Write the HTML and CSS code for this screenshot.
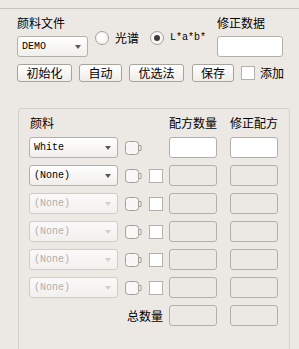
FILE: index.html
```html
<!DOCTYPE html>
<html lang="zh">
<head>
<meta charset="utf-8">
<link rel="stylesheet" href="styles.css">
</head>
<body>
<div class="topline"></div>
<div class="top">
  <div class="field file">
    <div class="label">颜料文件</div>
    <div class="select"><span>DEMO</span><i class="arrow"></i></div>
  </div>
  <div class="radios">
    <div class="radio"><span class="circle"></span><span>光谱</span></div>
    <div class="radio"><span class="circle checked"></span><span class="mono">L*a*b*</span></div>
  </div>
  <div class="field fix">
    <div class="label">修正数据</div>
    <div class="input"></div>
  </div>
</div>
<div class="buttons">
  <div class="btn w55">初始化</div>
  <div class="btn w43">自动</div>
  <div class="btn w55">优选法</div>
  <div class="btn w42 shift">保存</div>
  <div class="check"><span class="box"></span><span>添加</span></div>
</div>
<div class="group">
  <div class="grid">
    <div class="label c1">颜料</div>
    <div class="label c4">配方数量</div>
    <div class="label c5">修正配方</div>

    <div class="select c1"><span>White</span><i class="arrow"></i></div>
    <svg class="swatch c2" width="17" height="14" viewBox="0 0 17 14"><path d="M13.5 4.5h2.5v5h-2.5" fill="#efede9" stroke="#a19d97"/><rect x="0.5" y="0.5" width="13" height="13" rx="3" fill="#f8f7f5" stroke="#a19d97"/></svg>
    <div class="input c4"></div>
    <div class="input c5"></div>

    <div class="select c1"><span>(None)</span><i class="arrow"></i></div>
    <svg class="swatch c2" width="17" height="14" viewBox="0 0 17 14"><path d="M13.5 4.5h2.5v5h-2.5" fill="#efede9" stroke="#a19d97"/><rect x="0.5" y="0.5" width="13" height="13" rx="3" fill="#f8f7f5" stroke="#a19d97"/></svg>
    <span class="box c3"></span>
    <div class="input off c4"></div>
    <div class="input off c5"></div>

    <div class="select dis c1"><span>(None)</span><i class="arrow"></i></div>
    <svg class="swatch c2" width="17" height="14" viewBox="0 0 17 14"><path d="M13.5 4.5h2.5v5h-2.5" fill="#efede9" stroke="#a19d97"/><rect x="0.5" y="0.5" width="13" height="13" rx="3" fill="#f8f7f5" stroke="#a19d97"/></svg>
    <span class="box c3"></span>
    <div class="input off c4"></div>
    <div class="input off c5"></div>

    <div class="select dis c1"><span>(None)</span><i class="arrow"></i></div>
    <svg class="swatch c2" width="17" height="14" viewBox="0 0 17 14"><path d="M13.5 4.5h2.5v5h-2.5" fill="#efede9" stroke="#a19d97"/><rect x="0.5" y="0.5" width="13" height="13" rx="3" fill="#f8f7f5" stroke="#a19d97"/></svg>
    <span class="box c3"></span>
    <div class="input off c4"></div>
    <div class="input off c5"></div>

    <div class="select dis c1"><span>(None)</span><i class="arrow"></i></div>
    <svg class="swatch c2" width="17" height="14" viewBox="0 0 17 14"><path d="M13.5 4.5h2.5v5h-2.5" fill="#efede9" stroke="#a19d97"/><rect x="0.5" y="0.5" width="13" height="13" rx="3" fill="#f8f7f5" stroke="#a19d97"/></svg>
    <span class="box c3"></span>
    <div class="input off c4"></div>
    <div class="input off c5"></div>

    <div class="select dis c1"><span>(None)</span><i class="arrow"></i></div>
    <svg class="swatch c2" width="17" height="14" viewBox="0 0 17 14"><path d="M13.5 4.5h2.5v5h-2.5" fill="#efede9" stroke="#a19d97"/><rect x="0.5" y="0.5" width="13" height="13" rx="3" fill="#f8f7f5" stroke="#a19d97"/></svg>
    <span class="box c3"></span>
    <div class="input off c4"></div>
    <div class="input off c5"></div>

    <div class="label total">总数量</div>
    <div class="input off c4"></div>
    <div class="input off c5"></div>
  </div>
</div>
</body>
</html>
```

FILE: styles.css
```css
* { box-sizing: border-box; margin: 0; padding: 0; }
html, body { height: 349px; overflow: hidden; }
body {
  background: #ece9e5;
  font: 12px/14px "Noto Sans CJK SC", "Noto Sans", sans-serif;
  color: #000;
}
.topline { margin-top: 8px; height: 1px; background: #c6c2bc; }

.top { display: flex; align-items: flex-start; padding: 7px 0 0 17px; }
.field { display: flex; flex-direction: column; gap: 6px; }
.file { width: 71px; }
.fix { width: 66px; margin-left: 11px; }
.label { height: 14px; line-height: 14px; white-space: nowrap; }

.select {
  height: 21px;
  border: 1px solid #b3afa9;
  border-radius: 3px;
  background: linear-gradient(#ffffff, #f1efec);
  display: flex;
  align-items: center;
  padding-left: 4px;
  font: 10px/12px "Liberation Mono", monospace;
  color: #000;
}
.arrow {
  margin-left: auto;
  margin-right: 6px;
  width: 0; height: 0;
  border-top: 4px solid #5a5854;
  border-left: 3.5px solid transparent;
  border-right: 3.5px solid transparent;
}
.select.dis { border-color: #d0cdc8; color: #b3b0ab; background: linear-gradient(#fbfaf9, #f2f0ed); }
.select.dis .arrow { border-top-color: #d2cfca; }

.radios { display: flex; gap: 11px; margin: 15px 0 0 7px; }
.radio { display: flex; align-items: center; gap: 6px; height: 14px; white-space: nowrap; }
.circle {
  width: 14px; height: 14px; border-radius: 50%;
  border: 1px solid #a6a29c;
  background: radial-gradient(circle at 40% 40%, #ffffff, #f1efec);
  display: flex; align-items: center; justify-content: center;
}
.circle.checked::after { content: ""; width: 6px; height: 6px; border-radius: 50%; background: #3c3c3c; }
.mono { font: 10px/12px "Liberation Mono", monospace; }

.input {
  height: 21px;
  border: 1px solid #b3b0ab;
  border-radius: 3px;
  background: #fff;
}
.input.off { background: transparent; }

.buttons { display: flex; align-items: center; gap: 7px; padding-left: 17px; margin-top: 7px; }
.btn {
  height: 18px;
  border: 1px solid #a7a39d;
  border-radius: 3px;
  background: linear-gradient(#ffffff, #efede9);
  text-align: center;
  line-height: 16px;
}
.w55 { width: 55px; }
.w43 { width: 43px; }
.w42 { width: 42px; }
.shift { margin-left: 1px; }
.check { display: flex; align-items: center; gap: 5px; }
.box {
  width: 14px; height: 14px;
  border: 1px solid #b5b1ab;
  background: #fff;
}

.group {
  margin: 26px 0 0 18px;
  width: 272px;
  border: 1px solid #d5d1cb;
  border-bottom: none;
  border-radius: 4px 4px 0 0;
  padding: 7px 0 23px 10px;
}
.grid {
  display: grid;
  grid-template-columns: 96px 24px 20px 61px 48px;
  grid-template-rows: 14px;
  grid-auto-rows: 21px;
  row-gap: 7px;
  align-items: center;
}
.grid .select { width: 89px; }
.c1 { grid-column: 1; }
.c2 { grid-column: 2; }
.c3 { grid-column: 3; }
.c4 { grid-column: 4; width: 48px; }
.c5 { grid-column: 5; width: 48px; }
.grid .label.c1 { padding-left: 1px; }
.swatch { display: block; }
.total { grid-column: 2 / 4; justify-self: end; margin-right: 6px; }
```
